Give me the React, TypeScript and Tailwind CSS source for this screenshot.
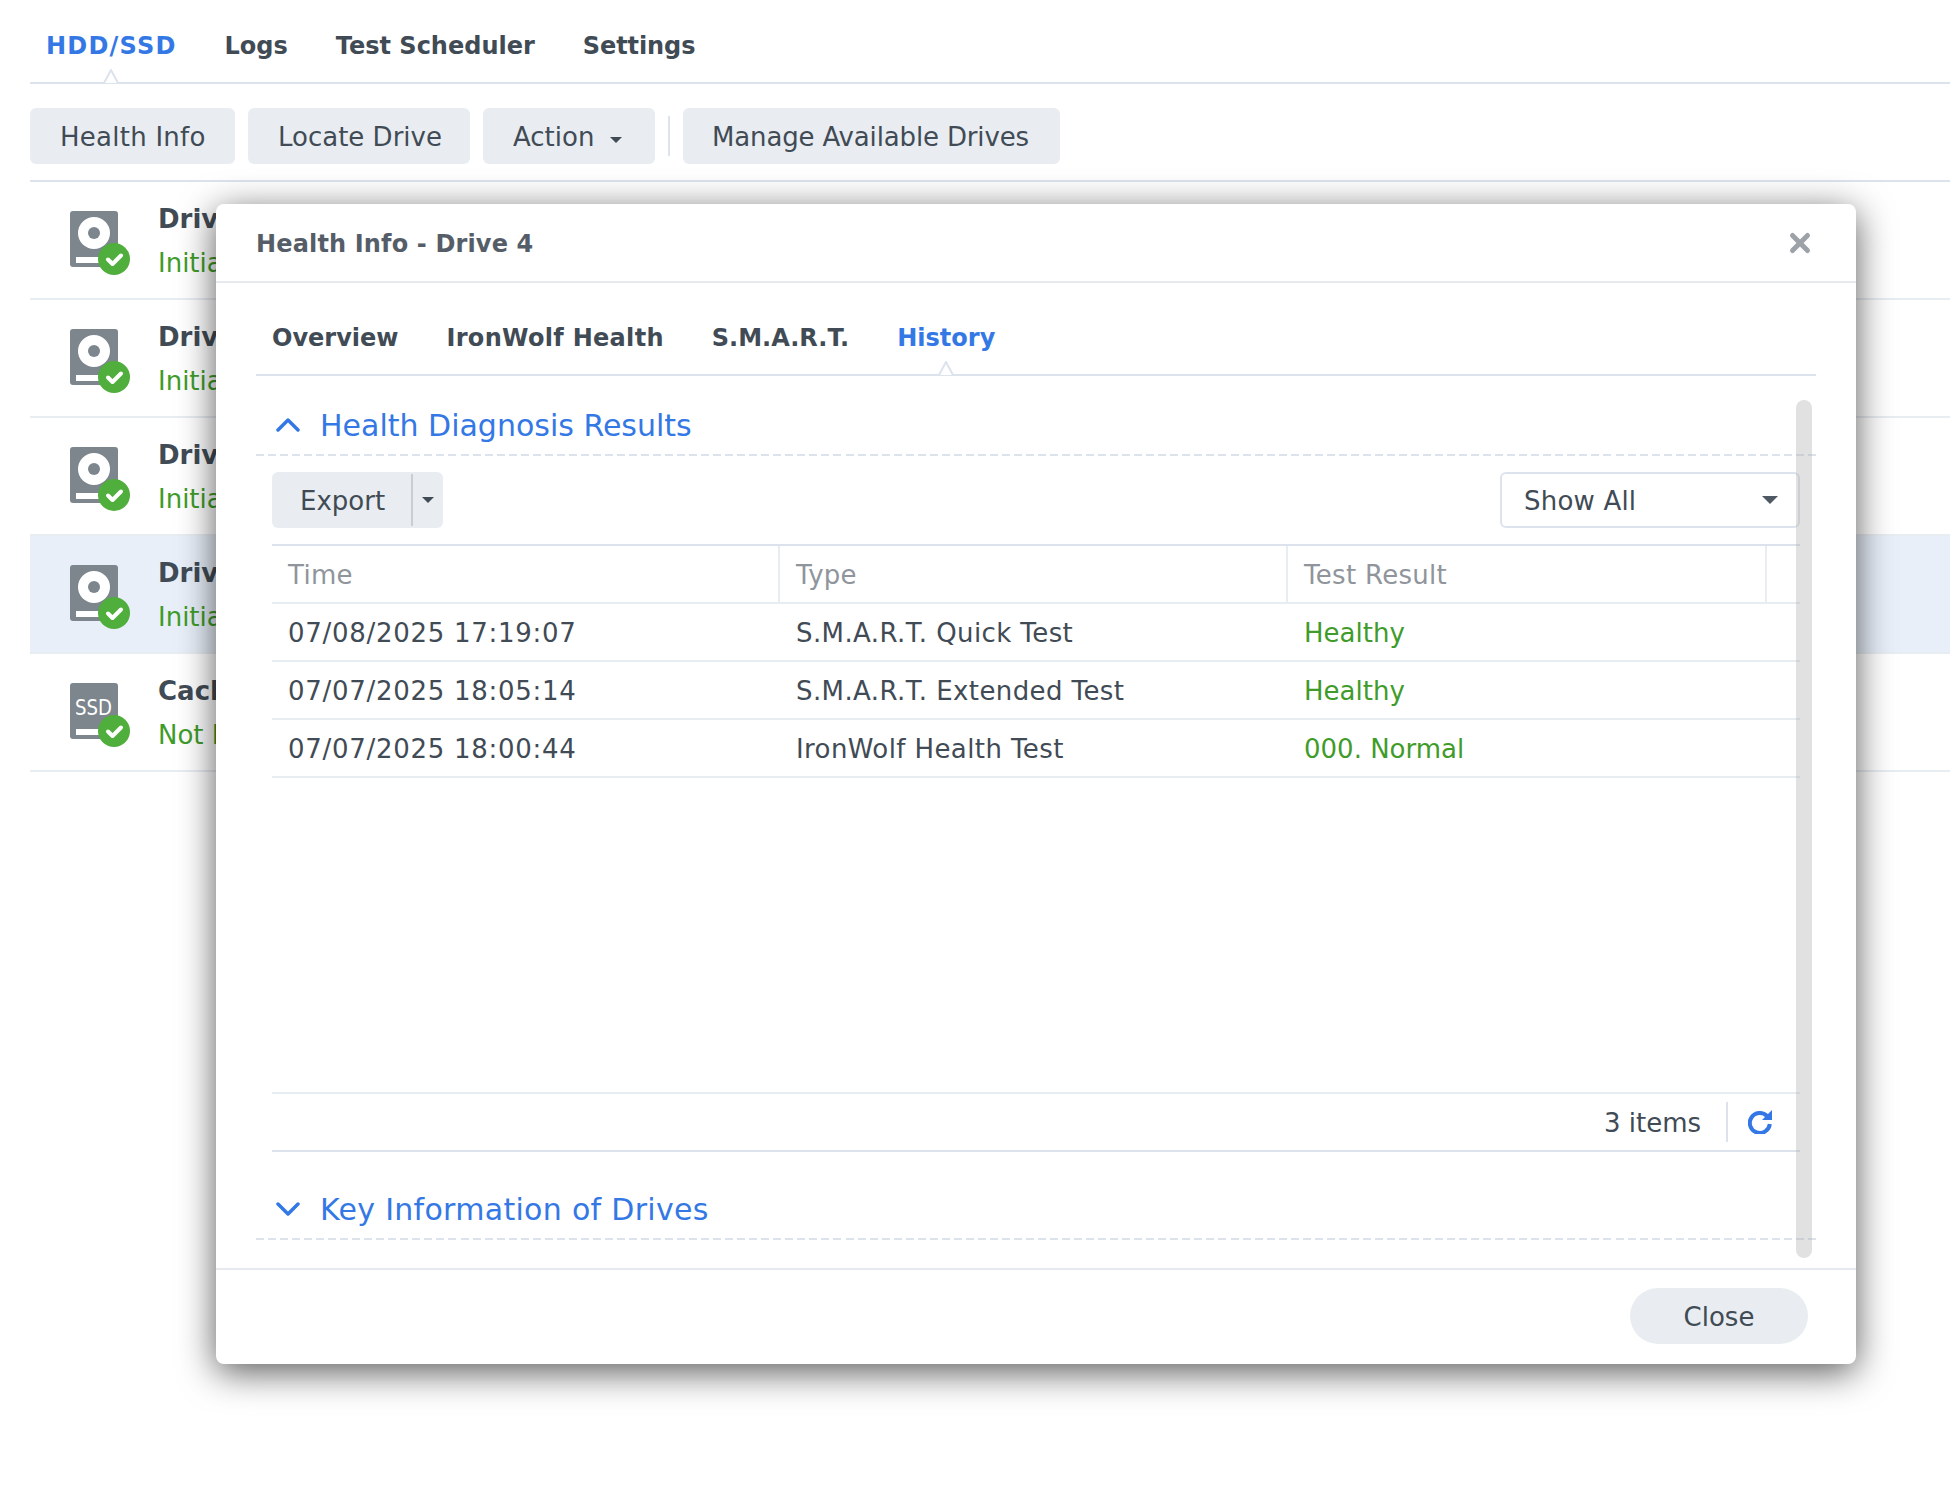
import { X } from "lucide-react";

const font = "font-['DejaVu_Sans',Verdana,sans-serif]";

const drives = [
  { name: "Drive 1", status: "Initialized", ssd: false, selected: false },
  { name: "Drive 2", status: "Initialized", ssd: false, selected: false },
  { name: "Drive 3", status: "Initialized", ssd: false, selected: false },
  { name: "Drive 4", status: "Initialized", ssd: false, selected: true },
  { name: "Cache Device 1", status: "Not Initialized", ssd: true, selected: false },
];

const history = [
  { time: "07/08/2025 17:19:07", type: "S.M.A.R.T. Quick Test", result: "Healthy" },
  { time: "07/07/2025 18:05:14", type: "S.M.A.R.T. Extended Test", result: "Healthy" },
  { time: "07/07/2025 18:00:44", type: "IronWolf Health Test", result: "000. Normal" },
];

function TabCaret() {
  return (
    <svg className="absolute bottom-[-2px] left-1/2 -ml-[14px]" width="28" height="15" viewBox="0 0 28 15">
      <path d="M0 14H7L14 1L21 14H28" fill="#fff" stroke="#dde3ec" strokeWidth="2" />
    </svg>
  );
}

function Tab({ label, active, className }: { label: string; active?: boolean; className: string }) {
  return (
    <div className={`relative h-full px-4 text-[24px] leading-[28px] font-bold ${active ? "text-[#3478e5]" : "text-[#414b55]"} ${className}`}>
      {label}
      {active ? <TabCaret /> : null}
    </div>
  );
}

function ToolButton({ label, caret, className }: { label: string; caret?: boolean; className: string }) {
  return (
    <button className={`flex h-[56px] items-center gap-4 rounded-[6px] bg-[#e9edf1] pt-[3px] text-[26px] text-[#414b55] ${className}`}>
      {label}
      {caret ? <span className="mt-1 h-0 w-0 border-x-[6px] border-t-[6px] border-x-transparent border-t-[#414b55]" /> : null}
    </button>
  );
}

function DriveIcon({ ssd }: { ssd: boolean }) {
  return (
    <svg width="64" height="64" viewBox="0 0 64 64" className="mt-[6px] shrink-0">
      <rect x="0" y="0" width="48" height="56" rx="3" fill="#7d858d" />
      {ssd ? (
        <text x="5" y="32" fontSize="21" fill="#fff" textLength="37" lengthAdjust="spacingAndGlyphs" fontFamily="'DejaVu Sans', sans-serif">
          SSD
        </text>
      ) : (
        <>
          <circle cx="24" cy="22" r="16" fill="#fff" />
          <circle cx="24" cy="22" r="6" fill="#7d858d" />
        </>
      )}
      <rect x="6" y="46" width="26" height="6" fill="#fff" />
      <circle cx="44" cy="48" r="16" fill="#50ae3c" />
      <path d="M38 48.5L42.5 53L51 44.5" fill="none" stroke="#fff" strokeWidth="4" strokeLinecap="round" strokeLinejoin="round" />
    </svg>
  );
}

function DashedLine() {
  return <div className="h-[2px] bg-[repeating-linear-gradient(90deg,#dde3ec_0_8px,transparent_8px_12.031px)]" />;
}

function Section({ title, open, className }: { title: string; open: boolean; className?: string }) {
  return (
    <div className="flex h-[78px] items-center gap-[20px] pt-[20px] pl-[20px] text-[#3478e5]">
      <svg width="24" height="14" viewBox="0 0 24 14" fill="none" stroke="currentColor" strokeWidth="3.5" strokeLinecap="round" strokeLinejoin="round">
        <path d={open ? "M2 12L12 2L22 12" : "M2 2L12 12L22 2"} />
      </svg>
      <span className={`text-[30px] ${className ?? ""}`}>{title}</span>
    </div>
  );
}

export default function App() {
  return (
    <div className={`relative h-[1494px] w-[1950px] overflow-hidden bg-white ${font}`}>
      <div className="pl-[30px]">
        <div className="flex h-[84px] gap-[16px] border-b-2 border-[#dde3ec]">
          <Tab label="HDD/SSD" active className="pt-[32px] tracking-[1.2px]" />
          <Tab label="Logs" className="pt-[32px]" />
          <Tab label="Test Scheduler" className="pt-[32px]" />
          <Tab label="Settings" className="pt-[32px] tracking-[-0.1px]" />
        </div>
        <div className="flex h-[98px] items-start gap-[13px] border-b-2 border-[#dde3ec] pt-[24px]">
          <ToolButton label="Health Info" className="w-[205px] pl-[30px] tracking-[0.25px]" />
          <ToolButton label="Locate Drive" className="w-[222px] pl-[30px]" />
          <ToolButton label="Action" caret className="w-[172px] pl-[30px]" />
          <div className="mt-[8px] h-[40px] w-[2px] bg-[#dde3ec]" />
          <ToolButton label="Manage Available Drives" className="w-[377px] pl-[29px] tracking-[-0.15px]" />
        </div>
        {drives.map((d) => (
          <div key={d.name} className={`flex h-[118px] items-center gap-[24px] border-b-2 border-[#e8edf2] pl-[40px] ${d.selected ? "bg-[#e8eff9]" : ""}`}>
            <DriveIcon ssd={d.ssd} />
            <div className="mt-[2px] flex flex-col gap-[15px] whitespace-nowrap">
              <span className="text-[26px] leading-[29px] font-bold text-[#414b55]">{d.name}</span>
              <span className="text-[26px] leading-[29px] text-[#3f9c2a]">{d.status}</span>
            </div>
          </div>
        ))}
      </div>

      {/* dialog sits over the page */}
      <div className="absolute top-[204px] left-[216px] flex h-[1160px] w-[1640px] flex-col rounded-[8px] bg-white shadow-[0_8px_36px_rgba(0,0,0,0.65)]">
        <div className="flex h-[79px] shrink-0 items-center justify-between border-b-2 border-[#e6eaef] pr-[41px] pl-[40px]">
          <span className="pt-[2px] text-[24px] font-bold tracking-[0.15px] text-[#555e68]">Health Info - Drive 4</span>
          <X size={30} strokeWidth={4} className="text-[#9ca2a8]" />
        </div>

        <div className="relative flex-1 px-[40px]">
          <div className="flex h-[93px] gap-[16px] border-b-2 border-[#dde3ec]">
            <Tab label="Overview" className="pt-[41px]" />
            <Tab label="IronWolf Health" className="pt-[41px] tracking-[0.3px]" />
            <Tab label="S.M.A.R.T." className="pt-[41px]" />
            <Tab label="History" active className="pt-[41px]" />
          </div>

          <Section title="Health Diagnosis Results" open />
          <DashedLine />

          <div className="px-4">
            <div className="flex h-[88px] items-start justify-between pt-[16px]">
              <div className="flex h-[56px] w-[171px] items-center rounded-[6px] bg-[#e9edf1] text-[26px] text-[#414b55]">
                <span className="w-[139px] pt-[2px] pl-[28px]">Export</span>
                <span className="h-[52px] w-[2px] bg-[#c9ced4]" />
                <span className="ml-[9px] h-0 w-0 border-x-[6px] border-t-[6px] border-x-transparent border-t-[#414b55]" />
              </div>
              <div className="flex h-[56px] w-[300px] items-center justify-between rounded-[6px] border-2 border-[#dde3ec] pr-[20px] pl-[22px] text-[26px] text-[#414b55]">
                <span className="pt-[2px] tracking-[0.2px]">Show All</span>
                <span className="h-0 w-0 border-x-[8px] border-t-[8px] border-x-transparent border-t-[#4f5963]" />
              </div>
            </div>

            <div className="grid h-[60px] grid-cols-[508px_508px_479px_33px] border-y-2 border-t-[#dde3ec] border-b-[#e8edf2] text-[26px] tracking-[0.3px] text-[#8f959b]">
              <div className="flex items-center border-r-2 border-[#e8edf2] pt-[2px] pl-4">Time</div>
              <div className="flex items-center border-r-2 border-[#e8edf2] pt-[2px] pl-4">Type</div>
              <div className="flex items-center border-r-2 border-[#e8edf2] pt-[2px] pl-4">Test Result</div>
              <div />
            </div>

            <div className="h-[488px]">
              {history.map((row) => (
                <div key={row.time} className="grid h-[58px] grid-cols-[508px_508px_512px] items-center border-b-2 border-[#e8edf2] pt-[2px] text-[26px] text-[#414b55]">
                  <div className="pl-4 tracking-[0.72px]">{row.time}</div>
                  <div className="pl-4 tracking-[0.4px]">{row.type}</div>
                  <div className="pl-4 text-[#3f9c2a]">{row.result}</div>
                </div>
              ))}
            </div>

            <div className="flex h-[60px] items-center justify-end border-y-2 border-t-[#e8edf2] border-b-[#dde3ec] pr-[28px] text-[26px] text-[#414b55]">
              <span className="pt-[2px]">3 items</span>
              <span className="mr-[20px] ml-[25px] h-[40px] w-[2px] bg-[#dde3ec]" />
              <svg width="24" height="24" viewBox="0 0 24 24" fill="none">
                <path d="M19 6A10 10 0 1 0 21.8 14" stroke="#3478e5" strokeWidth="4" />
                <path d="M24 0V10H14Z" fill="#3478e5" />
              </svg>
            </div>
          </div>

          <div className="mt-[8px]">
            <Section title="Key Information of Drives" open={false} className="tracking-[0.3px]" />
            <DashedLine />
          </div>

          {/* scrollbar track overlays the content */}
          <div className="absolute top-[117px] right-[44px] h-[858px] w-[16px] rounded-full bg-[rgba(170,170,170,0.35)]" />
        </div>

        <div className="flex h-[96px] shrink-0 items-start justify-end border-t-2 border-[#e6eaef] pt-[18px] pr-[48px]">
          <button className="h-[56px] w-[178px] rounded-full bg-[#e9edf1] pt-[2px] text-[26px] text-[#414b55]">Close</button>
        </div>
      </div>
    </div>
  );
}
